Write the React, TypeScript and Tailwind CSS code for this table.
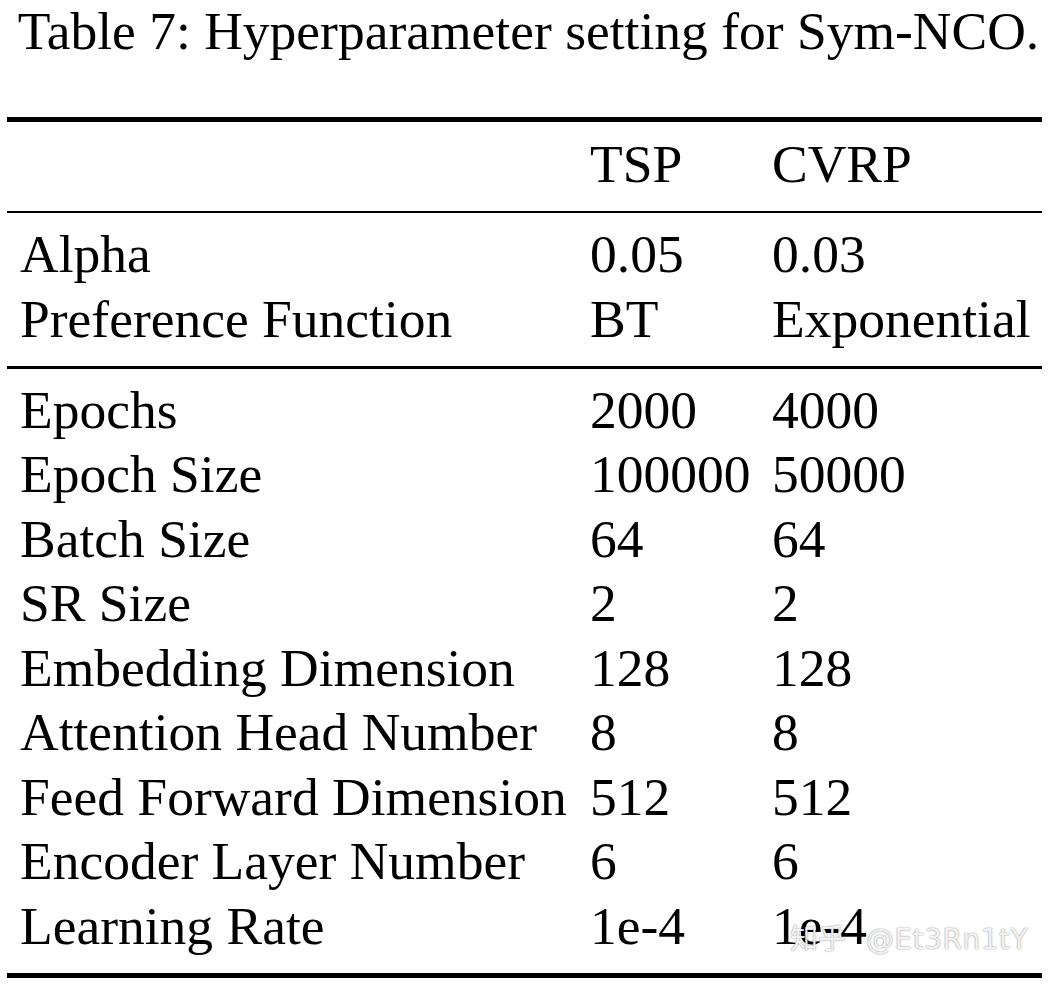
const groups: [string, string, string][][] = [
  [
    ['Alpha', '0.05', '0.03'],
    ['Preference Function', 'BT', 'Exponential'],
  ],
  [
    ['Epochs', '2000', '4000'],
    ['Epoch Size', '100000', '50000'],
    ['Batch Size', '64', '64'],
    ['SR Size', '2', '2'],
    ['Embedding Dimension', '128', '128'],
    ['Attention Head Number', '8', '8'],
    ['Feed Forward Dimension', '512', '512'],
    ['Encoder Layer Number', '6', '6'],
    ['Learning Rate', '1e-4', '1e-4'],
  ],
]

function Rows({ rows, className }: { rows: [string, string, string][]; className: string }) {
  return (
    <div className={`grid grid-cols-[570px_182px_1fr] pl-[13px] leading-[64.5px] ${className}`}>
      {rows.map(([label, tsp, cvrp]) => (
        <div key={label} className="contents">
          <span className="whitespace-nowrap">{label}</span>
          <span className="whitespace-nowrap">{tsp}</span>
          <span className="whitespace-nowrap">{cvrp}</span>
        </div>
      ))}
    </div>
  )
}

export default function App() {
  return (
    <div className="relative w-[1057px] h-[986px] overflow-hidden bg-white text-black font-['Liberation_Serif',serif] text-[53.5px]">
      <p className="pt-[4px] text-center leading-[54px] whitespace-nowrap">
        Table 7: Hyperparameter setting for Sym-NCO.
      </p>

      <div className="ml-[7px] w-[1035px] mt-[59px]">
        <div className="h-[5px] bg-black" />
        <Rows rows={[['', 'TSP', 'CVRP']]} className="pt-[10px] pb-[14px]" />
        <div className="h-[2.5px] bg-black" />
        <Rows rows={groups[0]} className="pt-[9px] pb-[15px]" />
        <div className="h-[2.5px] bg-black" />
        <Rows rows={groups[1]} className="pt-[9px] pb-[15px]" />
        <div className="h-[5px] bg-black" />
      </div>

      {/* zhihu watermark */}
      <div className="absolute left-[790px] top-[922px] flex items-center gap-[20px] leading-[36px] text-[28px] text-white/90 font-['DejaVu_Sans','Noto_Sans_CJK_SC',sans-serif] [text-shadow:0_0_1.5px_rgba(0,0,0,0.6)]">
        <span>知乎</span>
        <span className="tracking-[0.5px]">@Et3Rn1tY</span>
      </div>
    </div>
  )
}
